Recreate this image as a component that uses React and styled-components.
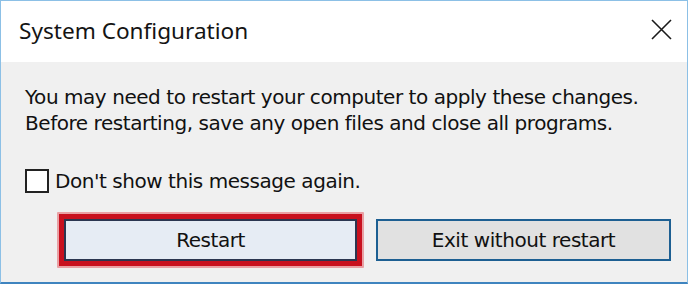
import React from "react";
import styled, { createGlobalStyle } from "styled-components";

const Global = createGlobalStyle`
  html, body { margin: 0; padding: 0; background: #ffffff; }
  body { width: 694px; height: 286px; overflow: hidden; }
`;

const Window = styled.div`
  box-sizing: border-box;
  width: 688px;
  height: 284px;
  border: 1px solid #8cc0e6;
  border-bottom: 2px solid #3f84bf;
  background: #f0f0f0;
  display: flex;
  flex-direction: column;
`;

const TitleBar = styled.div`
  box-sizing: border-box;
  height: 61px;
  background: #ffffff;
  display: flex;
  align-items: center;
  justify-content: space-between;
  padding: 0 4px 0 18px;
`;

const Title = styled.span`
  font-family: "Noto Sans", "Open Sans", sans-serif;
  font-size: 22.6px;
  color: #141414;
  margin-top: -2px;
`;

const CloseButton = styled.button`
  width: 44px;
  height: 40px;
  border: none;
  background: transparent;
  display: flex;
  align-items: center;
  justify-content: center;
  padding: 0;
  margin-top: -4px;
`;

const Body = styled.div`
  flex: 1;
  display: flex;
  flex-direction: column;
  padding: 22px 0 0 24px;
  font-family: "DejaVu Sans", Verdana, sans-serif;
  color: #111111;
`;

const Message = styled.p`
  margin: 0;
  font-size: 20px;
  line-height: 26px;
  letter-spacing: -0.45px;
`;

const CheckRow = styled.label`
  display: flex;
  align-items: center;
  gap: 6px;
  margin-top: 33px;
  font-size: 20px;
  letter-spacing: -0.45px;
`;

const Box = styled.span`
  box-sizing: border-box;
  width: 24px;
  height: 24px;
  border: 2px solid #222222;
  background: #ffffff;
`;

const ButtonRow = styled.div`
  display: flex;
  align-items: center;
  margin-top: 19px;
  margin-left: 32px;
  gap: 12px;
`;

const Highlight = styled.div`
  box-sizing: border-box;
  padding: 5px;
  border: 2px solid #e9a0a4;
  background: #c8101e;
  border-radius: 1px;
`;

const Button = styled.button`
  box-sizing: border-box;
  width: ${(p) => p.$w}px;
  height: 42px;
  border: 2px solid ${(p) => (p.$primary ? "#2b3650" : "#1d5f92")};
  background: ${(p) => (p.$primary ? "#e6ecf4" : "#e1e1e1")};
  font-family: "DejaVu Sans", Verdana, sans-serif;
  font-size: 20px;
  letter-spacing: -0.45px;
  color: #111111;
  padding: 0;
  display: block;
`;

export default function App() {
  return (
    <>
      <Global />
      <Window>
        <TitleBar>
          <Title>System Configuration</Title>
          <CloseButton aria-label="Close">
            <svg width="21" height="21" viewBox="0 0 21 21">
              <path d="M1 1 L20 20 M20 1 L1 20" stroke="#1a1a1a" strokeWidth="1.6" fill="none" />
            </svg>
          </CloseButton>
        </TitleBar>
        <Body>
          <Message>
            You may need to restart your computer to apply these changes.
            <br />
            Before restarting, save any open files and close all programs.
          </Message>
          <CheckRow>
            <Box />
            Don't show this message again.
          </CheckRow>
          <ButtonRow>
            <Highlight>
              <Button $primary $w={293}>Restart</Button>
            </Highlight>
            <Button $w={295}>Exit without restart</Button>
          </ButtonRow>
        </Body>
      </Window>
    </>
  );
}
